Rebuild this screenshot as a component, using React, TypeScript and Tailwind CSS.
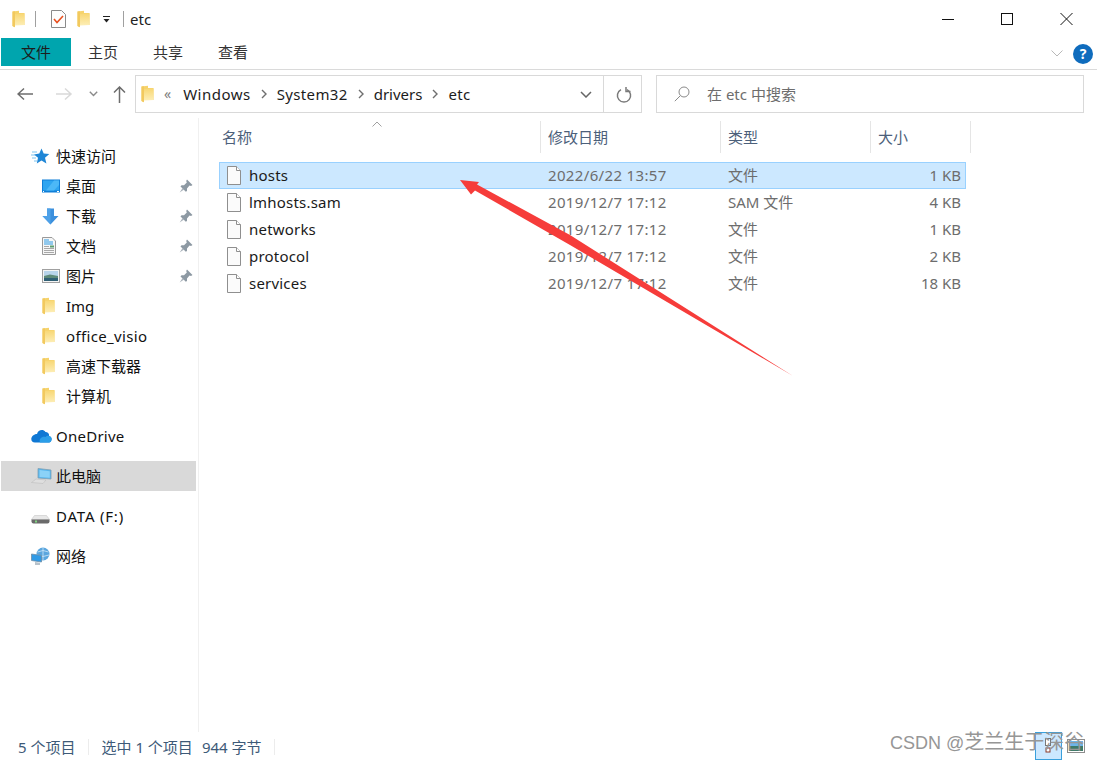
import React from "react";

const FONT = { fontFamily: '"Noto Sans", "Noto Sans CJK SC", sans-serif' };

// small drawn icons, all explorer style
function FolderIcon({ className = "" }: { className?: string }) {
  return (
    <svg className={className} width="13" height="18" viewBox="0 0 13 18">
      <defs>
        <linearGradient id="folderFill" x1="0" y1="0" x2="0" y2="1">
          <stop offset="0" stopColor="#f8d774" />
          <stop offset="1" stopColor="#fdeeb6" />
        </linearGradient>
      </defs>
      <path d="M0.5 1.5 L7 0.8 L7 3 L12.5 3 L12.5 15 L2.5 15 L2.5 17.2 L0.5 16 Z" fill="#f6d36c" />
      <path d="M3 4 L12.5 3.5 L12.5 15 L3 15.5 Z" fill="url(#folderFill)" />
      <path d="M0.5 1.5 L3 1.2 L3 17.2 L0.5 16 Z" fill="#f2c95e" />
    </svg>
  );
}

function FileIcon() {
  return (
    <svg width="16" height="19" viewBox="0 0 16 19">
      <path d="M1.5 0.5 H10.5 L14.5 4.5 V18.5 H1.5 Z" fill="#fbfbfb" stroke="#8f8f8f" />
      <path d="M10.5 0.5 V4.5 H14.5" fill="#ffffff" stroke="#8f8f8f" />
    </svg>
  );
}

function PinIcon() {
  return (
    <svg width="14" height="14" viewBox="0 0 14 14">
      <path d="M8 0.5 L13.5 6 L12 7 L10.5 6.5 L8 9.5 L8 12 L6.8 12.8 L1.5 7.5 L2.5 6.3 L5 6.3 L7.8 3.5 L7.2 2 Z" fill="#8d99a3" />
      <path d="M3.6 9 L5.2 10.6 L0.6 13.6 Z" fill="#aab3bb" />
    </svg>
  );
}

function StarIcon() {
  return (
    <svg width="19" height="17" viewBox="0 0 19 17">
      <path d="M10.5 0.5 L12.7 5.6 L18.3 6.1 L14 9.8 L15.4 15.6 L10.5 12.6 L5.8 15.6 L7 9.8 L3 6.4 L8.3 5.6 Z" fill="#1f86d6" />
      <path d="M1 4 H6 M0 7 H4 M1 10 H5 M3 13 H6" stroke="#7cc3ef" strokeWidth="1" />
    </svg>
  );
}

function DesktopIcon() {
  return (
    <svg width="18" height="14" viewBox="0 0 18 14">
      <rect width="18" height="13" y="0.5" fill="#0f7fd8" />
      <path d="M1 1.5 H17 V11.5 H1 Z" fill="#2ea5f0" />
      <path d="M4 11.5 L12 1.5 H17 V6 L12 11.5 Z" fill="#4cb8f7" />
      <path d="M1 12.5 H2 M15 12.5 H17" stroke="#ffffff" strokeWidth="1" />
    </svg>
  );
}

function DownloadIcon() {
  return (
    <svg width="17" height="17" viewBox="0 0 17 17">
      <path d="M5 0.5 H12 V8 H16.5 L8.5 16.5 L0.5 8 H5 Z" fill="#3c90dd" />
      <path d="M5 0.5 H8.5 V16.5 L0.5 8 H5 Z" fill="#4ea1e8" />
    </svg>
  );
}

function DocIcon() {
  return (
    <svg width="14" height="18" viewBox="0 0 14 18">
      <path d="M0.5 0.5 H10 L13.5 4 V17.5 H0.5 Z" fill="#f6f6f6" stroke="#9a9a9a" />
      <path d="M2 3 H7 M2 5 H11 M2 7 H11" stroke="#2d9be4" strokeWidth="1" />
      <path d="M2 9.5 H7 M2 11.5 H12 M2 13.5 H12 M2 15.5 H12" stroke="#a8a8a8" strokeWidth="1" />
      <rect x="8" y="8.5" width="4" height="2" fill="#5d9d70" />
    </svg>
  );
}

function PictureIcon() {
  return (
    <svg width="18" height="14" viewBox="0 0 18 14">
      <rect x="0.5" y="0.5" width="17" height="13" fill="#f4f4f4" stroke="#a0a0a0" />
      <rect x="2" y="2" width="14" height="10" fill="#b8d4ea" />
      <path d="M2 7 L8 5.5 L16 7 V9 H2 Z" fill="#5e8a78" />
      <path d="M2 9 H16 V12 H2 Z" fill="#2f5f74" />
    </svg>
  );
}

function CloudIcon() {
  return (
    <svg width="21" height="14" viewBox="0 0 21 14">
      <path d="M6 5 C7 1 12 -0.5 14.5 3 C17 3 18.5 5 18 7 C20 7.5 21 9 20.5 11 C20 13 19 13.5 17 13.5 H4 C1.5 13.5 0.3 12 0.3 10 C0.3 7.5 3 5 6 5 Z" fill="#0f78d4" />
      <path d="M9 13.5 C7.5 10 11 7 14.5 8 C15.5 6.8 17 6.6 18 7 C20 7.5 21 9 20.5 11 C20 13 19 13.5 17 13.5 Z" fill="#2b9ee8" />
    </svg>
  );
}

function PcIcon() {
  return (
    <svg width="21" height="17" viewBox="0 0 21 17">
      <path d="M7 0.5 L20 2 V11 L7 10 Z" fill="#55b6ef" stroke="#7f9fb2" strokeWidth="0.8" />
      <path d="M8.5 2 L18.8 3.2 V9.8 L8.5 9 Z" fill="#8bd2f7" />
      <path d="M5 11 L15 12 L12 15.5 L0.5 14.5 Z" fill="#dfdfdf" stroke="#bdbdbd" strokeWidth="0.6" />
    </svg>
  );
}

function DriveIcon() {
  return (
    <svg className="mt-[6px]" width="19" height="9" viewBox="0 0 19 9">
      <path d="M3.5 0.5 L15.5 0.5 L18.5 4.5 H0.5 Z" fill="#e8e8e8" stroke="#c8c8c8" strokeWidth="0.6" />
      <path d="M0.5 4.5 H18.5 V6.5 Q18.5 8.5 16.5 8.5 H2.5 Q0.5 8.5 0.5 6.5 Z" fill="#6a6a6a" />
      <rect x="4" y="5.5" width="2" height="2" fill="#7fd47f" />
    </svg>
  );
}

function NetworkIcon() {
  return (
    <svg width="20" height="19" viewBox="0 0 20 19">
      <circle cx="12" cy="7" r="6.5" fill="#5aa6de" />
      <path d="M6.5 5 Q12 2 17.5 5 M6 8 Q12 11 18 8 M12 0.5 V13.5" stroke="#cfe7f7" strokeWidth="0.8" fill="none" />
      <path d="M0.5 7 L10.5 8.5 V15 L0.5 13.5 Z" fill="#2f9ae6" stroke="#6c8da6" strokeWidth="0.8" />
      <path d="M4 15 L9 15.7 V18 H4 Z" fill="#b8c2ca" />
    </svg>
  );
}

const quickItems: { label: string; icon: React.ReactNode; pinned?: boolean; track?: string }[] = [
  { label: "桌面", icon: <DesktopIcon />, pinned: true },
  { label: "下载", icon: <DownloadIcon />, pinned: true },
  { label: "文档", icon: <DocIcon />, pinned: true },
  { label: "图片", icon: <PictureIcon />, pinned: true },
  { label: "Img", icon: <FolderIcon /> },
  { label: "office_visio", icon: <FolderIcon />, track: "tracking-[0.35px] text-[#111]" },
  { label: "高速下载器", icon: <FolderIcon /> },
  { label: "计算机", icon: <FolderIcon /> },
];

const files = [
  { name: "hosts", date: "2022/6/22 13:57", type: "文件", size: "1 KB", selected: true },
  { name: "lmhosts.sam", date: "2019/12/7 17:12", type: "SAM 文件", size: "4 KB" },
  { name: "networks", date: "2019/12/7 17:12", type: "文件", size: "1 KB" },
  { name: "protocol", date: "2019/12/7 17:12", type: "文件", size: "2 KB" },
  { name: "services", date: "2019/12/7 17:12", type: "文件", size: "18 KB" },
];

function Chevron() {
  return (
    <svg width="8" height="12" viewBox="0 0 8 12" className="mx-[9px] shrink-0">
      <path d="M2 2 L6 6 L2 10" fill="none" stroke="#6e6e6e" strokeWidth="1.4" />
    </svg>
  );
}

function NavRoot({ label, icon, track = "text-[#111]" }: { label: string; icon: React.ReactNode; track?: string }) {
  return (
    <div className="flex h-[30px] items-center pl-[31px]">
      <span className="flex w-[25px] shrink-0 items-center">{icon}</span>
      <span className={`text-[15px] ${track}`}>{label}</span>
    </div>
  );
}

export default function App() {
  return (
    <div className="relative flex h-[762px] w-[1097px] flex-col overflow-hidden bg-white text-[15px]" style={FONT}>
      {/* title bar */}
      <div className="flex h-[38px] shrink-0 items-center">
        <FolderIcon className="ml-[12px]" />
        <div className="ml-[10px] h-[16px] w-px bg-[#a0a0a0]" />
        <svg className="ml-[15px]" width="15" height="18" viewBox="0 0 15 18">
          <path d="M0.5 0.5 H10.5 L14.5 4.5 V17.5 H0.5 Z" fill="#fdfdfd" stroke="#8a8a8a" />
          <path d="M3 9 L6 12.5 L12 6" fill="none" stroke="#e8501f" strokeWidth="1.6" />
        </svg>
        <FolderIcon className="ml-[11px]" />
        <svg className="ml-[13px]" width="7" height="7" viewBox="0 0 7 7">
          <path d="M0 0.5 H7" stroke="#222" />
          <path d="M0.5 3 H6.5 L3.5 6.5 Z" fill="#222" />
        </svg>
        <div className="ml-[13px] h-[16px] w-px bg-[#a0a0a0]" />
        <span className="ml-[6px] text-[15px] text-[#222]">etc</span>
        <div className="ml-auto flex items-center">
          <svg width="59" height="14" viewBox="0 0 59 14"><path d="M23 7.5 H35" stroke="#111" /></svg>
          <svg width="59" height="14" viewBox="0 0 59 14"><rect x="23.5" y="1.5" width="11" height="11" fill="none" stroke="#111" /></svg>
          <svg className="mr-[1px]" width="59" height="14" viewBox="0 0 59 14"><path d="M23.5 1 L35.5 13 M35.5 1 L23.5 13" stroke="#111" /></svg>
        </div>
      </div>

      {/* ribbon tabs */}
      <div className="flex h-[32px] shrink-0 border-b border-b-[#dadada] pl-[1px]">
        <div className="flex h-[28px] w-[70px] items-center justify-center bg-[#00a5ae] pt-[1px] text-[#1c1c1c]">文件</div>
        <div className="flex h-[28px] items-center pl-[17px] pt-[1px] text-[#333]">主页</div>
        <div className="flex h-[28px] items-center pl-[35px] pt-[1px] text-[#333]">共享</div>
        <div className="flex h-[28px] items-center pl-[35px] pt-[1px] text-[#333]">查看</div>
        <div className="ml-auto mr-[4px] flex h-[28px] items-center gap-[10px] pt-[3px]">
          <svg width="12" height="7" viewBox="0 0 12 7">
            <path d="M0.5 0.5 L6 6 L11.5 0.5" fill="none" stroke="#b8b8b8" />
          </svg>
          <div className="flex h-[20px] w-[20px] items-center justify-center rounded-full bg-[#0f6cbd] text-[14px] font-bold leading-none text-white">?</div>
        </div>
      </div>

      {/* address row */}
      <div className="flex h-[48px] shrink-0 items-center">
        <svg className="ml-[17px]" width="17" height="14" viewBox="0 0 17 14">
          <path d="M1 7 H16 M7 1.5 L1 7 L7 12.5" fill="none" stroke="#6d6d6d" strokeWidth="1.5" />
        </svg>
        <svg className="ml-[22px]" width="17" height="14" viewBox="0 0 17 14">
          <path d="M0 7 H15 M9 1.5 L15 7 L9 12.5" fill="none" stroke="#d9d9d9" strokeWidth="1.5" />
        </svg>
        <svg className="ml-[16px]" width="9" height="6" viewBox="0 0 9 6">
          <path d="M0.8 0.8 L4.5 4.5 L8.2 0.8" fill="none" stroke="#8a8a8a" strokeWidth="1.4" />
        </svg>
        <svg className="ml-[15px]" width="13" height="17" viewBox="0 0 13 17">
          <path d="M6.5 1 V17 M1 6.5 L6.5 1 L12 6.5" fill="none" stroke="#6d6d6d" strokeWidth="1.5" />
        </svg>
        <div className="ml-[9px] flex h-[38px] w-[507px] items-center border border-[#d9d9d9] text-[#1c1c1c]">
          <FolderIcon className="ml-[5px]" />
          <span className="ml-[10px] mr-[12px] text-[14px] leading-none text-[#7d7d7d]">«</span>
          <span className="tracking-[0.5px]">Windows</span>
          <Chevron />
          <span className="tracking-[0.35px]">System32</span>
          <Chevron />
          <span>drivers</span>
          <Chevron />
          <span className="tracking-[0.3px]">etc</span>
          <svg className="ml-auto mr-[11px]" width="12" height="7" viewBox="0 0 12 7">
            <path d="M1 1 L6 6 L11 1" fill="none" stroke="#666" strokeWidth="1.5" />
          </svg>
          <div className="flex h-full w-[38px] items-center justify-center border-l border-l-[#d9d9d9] pl-[3px]">
            <svg width="16" height="17" viewBox="0 0 16 17">
              <path d="M5 3.6 A6.6 6.6 0 1 0 11 3.6" fill="none" stroke="#7a7a7a" strokeWidth="1.5" />
              <path d="M10 1 L10 5.5 L14.5 5.5" fill="none" stroke="#7a7a7a" strokeWidth="1.5" />
            </svg>
          </div>
        </div>
        <div className="ml-[14px] flex h-[38px] w-[428px] items-center border border-[#d9d9d9] pl-[17px] text-[#6d6d6d]">
          <svg width="16" height="16" viewBox="0 0 16 16">
            <circle cx="10" cy="6" r="5" fill="none" stroke="#8a8a8a" />
            <path d="M6.3 9.7 L0.8 15.2" stroke="#8a8a8a" />
          </svg>
          <span className="ml-[17px]">在 etc 中搜索</span>
        </div>
      </div>

      <div className="flex min-h-0 flex-1">
        {/* nav pane */}
        <div className="w-[199px] shrink-0 border-r border-r-[#f0f0f0] pt-[23px]">
          <NavRoot label="快速访问" icon={<StarIcon />} />
          {quickItems.map((item) => (
            <div key={item.label} className="flex h-[30px] items-center pl-[41px] pr-[5px]">
              <span className="flex w-[25px] shrink-0 items-center justify-start pl-[1px]">{item.icon}</span>
              <span className={item.track ?? "text-[#111]"}>{item.label}</span>
              {item.pinned && (
                <span className="ml-auto flex">
                  <PinIcon />
                </span>
              )}
            </div>
          ))}
          <div className="mt-[10px]">
            <NavRoot label="OneDrive" icon={<CloudIcon />} track="tracking-[0.25px] text-[#111]" />
          </div>
          <div className="mr-[2px] mt-[10px] ml-[1px] bg-[#d9d9d9]">
            <div className="-ml-[1px]">
              <NavRoot label="此电脑" icon={<PcIcon />} />
            </div>
          </div>
          <div className="mt-[10px]">
            <NavRoot label="DATA (F:)" icon={<DriveIcon />} track="tracking-[0.8px] text-[#111]" />
          </div>
          <div className="mt-[10px]">
            <NavRoot label="网络" icon={<NetworkIcon />} />
          </div>
        </div>

        {/* file list */}
        <div className="relative min-w-0 flex-1 pt-[3px]">
          <div className="ml-[17px] grid h-[32px] w-[755px] grid-cols-[325px_180px_150px_100px] text-[#4c607a]">
            <div className="flex items-center border-r border-r-[#e5e5e5] pl-[6px]">名称</div>
            <div className="flex items-center border-r border-r-[#e5e5e5] pl-[7px]">修改日期</div>
            <div className="flex items-center border-r border-r-[#e5e5e5] pl-[7px]">类型</div>
            <div className="flex items-center border-r border-r-[#e5e5e5] pl-[7px]">大小</div>
          </div>
          <svg className="absolute left-[173px] top-[3px]" width="10" height="6" viewBox="0 0 10 6">
            <path d="M0.5 5.5 L5 1 L9.5 5.5" fill="none" stroke="#a0a0a0" />
          </svg>
          <div className="ml-[20px] mt-[9px] w-[747px]">
            {files.map((f) => (
              <div
                key={f.name}
                className={
                  f.selected
                    ? "grid h-[27px] grid-cols-[328px_180px_150px_1fr] items-center border border-[#99d1ff] bg-[#cce8ff]"
                    : "grid h-[27px] grid-cols-[328px_180px_150px_1fr] items-center border border-transparent"
                }
              >
                <div className="flex items-center pl-[6px] text-[#1a1a1a]">
                  <FileIcon />
                  <span className="ml-[7px] tracking-[0.2px]">{f.name}</span>
                </div>
                <div className="tracking-[0.35px] text-[#6d6d6d]">{f.date}</div>
                <div className="text-[#6d6d6d]">{f.type}</div>
                <div className="pr-[4px] text-right text-[#6d6d6d]">{f.size}</div>
              </div>
            ))}
          </div>
        </div>
      </div>

      {/* status bar */}
      <div className="flex h-[30px] shrink-0 items-center text-[#3d5a78]">
        <span className="ml-[18px]">5 个项目</span>
        <div className="ml-[13px] h-[16px] w-px bg-[#ececec]" />
        <span className="ml-[12px]">选中 1 个项目</span>
        <span className="ml-[9px]">944 字节</span>
        <div className="ml-[12px] h-[16px] w-px bg-[#ececec]" />
      </div>

      {/* view switch, bottom right */}
      <div className="absolute bottom-[2px] left-[1035px] flex items-center">
        <div className="flex h-[28px] w-[27px] items-center justify-center border border-[#3aa0dc] bg-[#cce8ff]">
          <svg width="8" height="16" viewBox="0 0 8 16">
            <rect x="0.5" y="0.5" width="5" height="7" fill="#fff" stroke="#777" />
            <rect x="1" y="10" width="4" height="4" fill="#fff" stroke="#8a3a2a" />
          </svg>
        </div>
        <svg className="ml-[5px]" width="18" height="14" viewBox="0 0 18 14">
          <rect x="0.5" y="0.5" width="17" height="13" fill="#fff" stroke="#8d8d8d" />
          <rect x="2" y="2" width="14" height="5" fill="#6db4e8" />
          <rect x="2" y="7" width="14" height="5" fill="#3f7a68" />
        </svg>
      </div>

      {/* screenshot annotations */}
      <svg className="pointer-events-none absolute left-0 top-0" width="1097" height="762" viewBox="0 0 1097 762">
        <path d="M460 180 L479 182 L477 184.5 L570 235 L793 376 L570 245 L475 190.5 L471 194.5 Z" fill="#f63c3a" />
      </svg>
      <div className="pointer-events-none absolute left-[890px] top-[730px] text-[18px] text-[#969696]" style={{ fontFamily: '"Liberation Sans", "Noto Sans CJK SC", sans-serif' }}>
        CSDN @<span className="text-[20px] leading-none">芝兰生于深谷</span>
      </div>
    </div>
  );
}
